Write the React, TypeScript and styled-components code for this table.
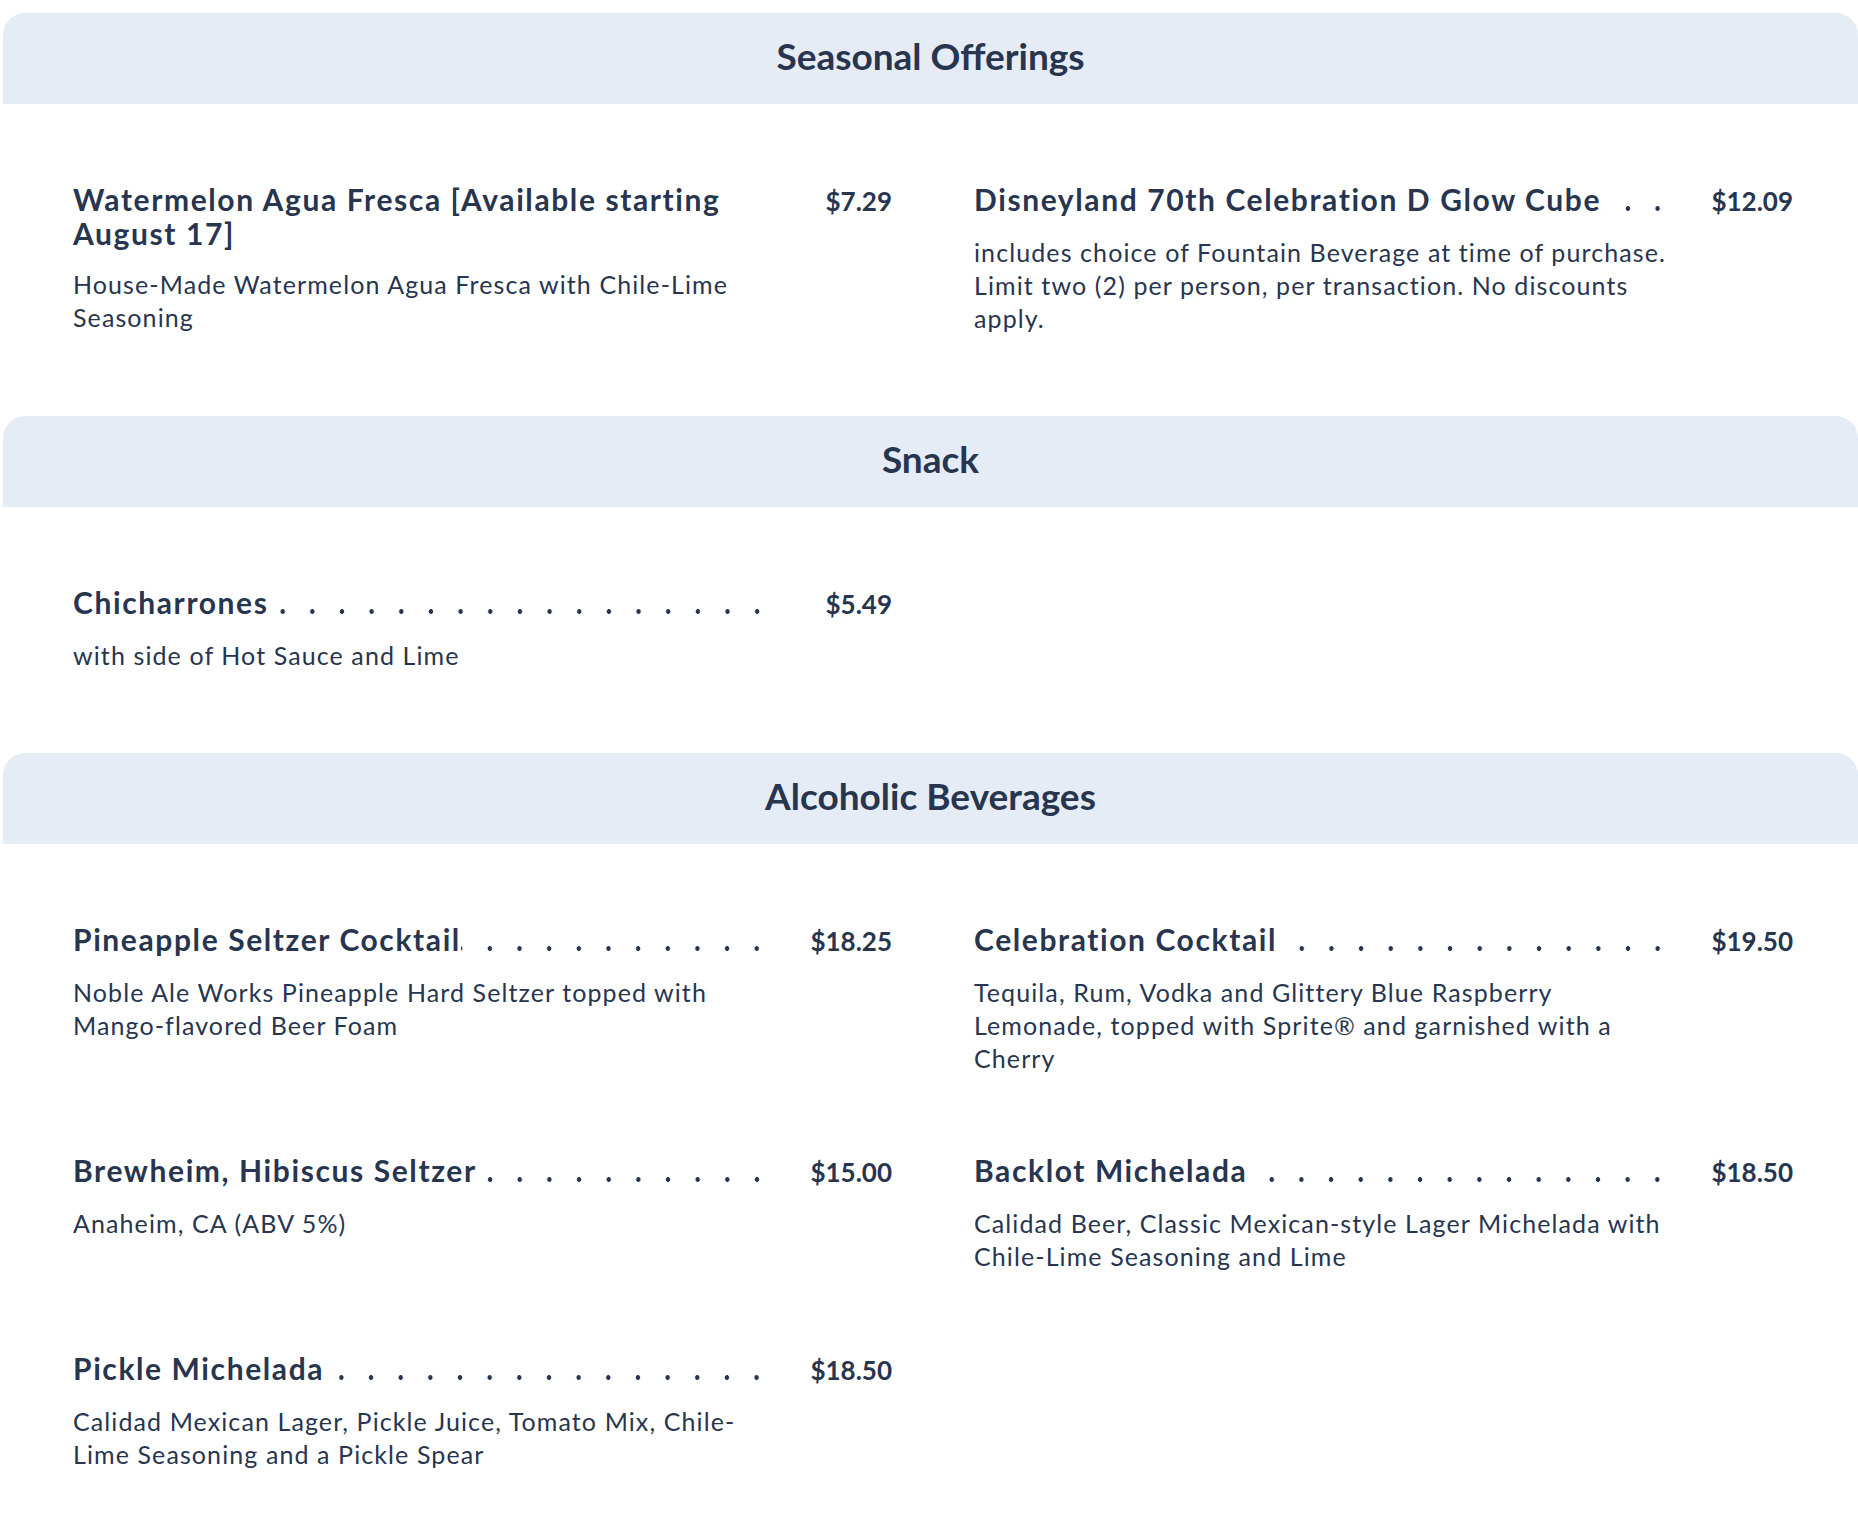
import React from "react";
import styled, { createGlobalStyle } from "styled-components";

const GlobalStyle = createGlobalStyle`
  html, body {
    margin: 0;
    padding: 0;
    background: #ffffff;
  }
  body {
    font-family: Lato, "Noto Sans", "Liberation Sans", sans-serif;
    color: #27354f;
  }
  * { box-sizing: border-box; }
`;

const Page = styled.main`
  padding: 13px 0 40px 3px;
  display: flex;
  flex-direction: column;
`;

const Section = styled.section`
  display: flex;
  flex-direction: column;
`;

const Band = styled.header`
  height: 91px;
  background: #e5ecf6;
  border-radius: 22px 22px 0 0;
  display: flex;
  align-items: center;
  justify-content: center;
`;

const BandTitle = styled.h2`
  margin: 0;
  font-size: 37px;
  font-weight: 700;
  line-height: 1;
  color: #27354f;
  padding-bottom: 6px;
`;

const Items = styled.div`
  display: grid;
  grid-template-columns: 1fr 1fr;
  column-gap: 82px;
  row-gap: 78px;
  padding: 78px 65px 81px 70px;
`;

const Item = styled.article`
  display: flex;
  flex-direction: column;
  gap: 18px;
  min-width: 0;
`;

const Head = styled.div`
  display: flex;
  align-items: baseline;
`;

const Title = styled.h3`
  margin: 0;
  flex: 0 1 auto;
  min-width: 0;
  font-size: 30px;
  font-weight: 700;
  line-height: 34px;
  letter-spacing: 1.6px;
  color: #27354f;
`;

const Leader = styled.span`
  flex: 1 1 0;
  min-width: 0;
  height: 5px;
  display: block;
  background-image: radial-gradient(circle, #27354f 2.1px, transparent 2.6px);
  background-size: 29.66px 5px;
  background-position: right -9.5px bottom 0;
  background-repeat: repeat-x;
`;

const Price = styled.span`
  flex: 0 0 130px;
  text-align: right;
  font-size: 26px;
  font-weight: 700;
  line-height: 34px;
  color: #27354f;
`;

const Desc = styled.p`
  margin: 0;
  padding-right: 120px;
  font-size: 25px;
  font-weight: 400;
  line-height: 33px;
  letter-spacing: 1.1px;
  color: #27354f;
`;

type MenuItem = { name: string; price: string; desc: string };
type MenuSection = { title: string; items: MenuItem[] };

const sections: MenuSection[] = [
  {
    title: "Seasonal Offerings",
    items: [
      {
        name: "Watermelon Agua Fresca [Available starting August 17]",
        price: "$7.29",
        desc: "House-Made Watermelon Agua Fresca with Chile-Lime Seasoning",
      },
      {
        name: "Disneyland 70th Celebration D Glow Cube",
        price: "$12.09",
        desc: "includes choice of Fountain Beverage at time of purchase. Limit two (2) per person, per transaction. No discounts apply.",
      },
    ],
  },
  {
    title: "Snack",
    items: [
      {
        name: "Chicharrones",
        price: "$5.49",
        desc: "with side of Hot Sauce and Lime",
      },
    ],
  },
  {
    title: "Alcoholic Beverages",
    items: [
      {
        name: "Pineapple Seltzer Cocktail",
        price: "$18.25",
        desc: "Noble Ale Works Pineapple Hard Seltzer topped with Mango-flavored Beer Foam",
      },
      {
        name: "Celebration Cocktail",
        price: "$19.50",
        desc: "Tequila, Rum, Vodka and Glittery Blue Raspberry Lemonade, topped with Sprite® and garnished with a Cherry",
      },
      {
        name: "Brewheim, Hibiscus Seltzer",
        price: "$15.00",
        desc: "Anaheim, CA (ABV 5%)",
      },
      {
        name: "Backlot Michelada",
        price: "$18.50",
        desc: "Calidad Beer, Classic Mexican-style Lager Michelada with Chile-Lime Seasoning and Lime",
      },
      {
        name: "Pickle Michelada",
        price: "$18.50",
        desc: "Calidad Mexican Lager, Pickle Juice, Tomato Mix, Chile-Lime Seasoning and a Pickle Spear",
      },
    ],
  },
];

export default function App() {
  return (
    <>
      <GlobalStyle />
      <Page>
        {sections.map((s) => (
          <Section key={s.title}>
            <Band>
              <BandTitle>{s.title}</BandTitle>
            </Band>
            <Items>
              {s.items.map((it) => (
                <Item key={it.name}>
                  <Head>
                    <Title>{it.name}</Title>
                    <Leader aria-hidden="true" />
                    <Price>{it.price}</Price>
                  </Head>
                  <Desc>{it.desc}</Desc>
                </Item>
              ))}
            </Items>
          </Section>
        ))}
      </Page>
    </>
  );
}
